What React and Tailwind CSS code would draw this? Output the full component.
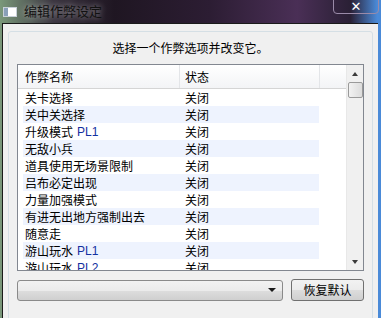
import React from "react";

const rows = [
  { name: "关卡选择" },
  { name: "关中关选择" },
  { name: "升级模式", tag: "PL1" },
  { name: "无敌小兵" },
  { name: "道具使用无场景限制" },
  { name: "吕布必定出现" },
  { name: "力量加强模式" },
  { name: "有进无出地方强制出去" },
  { name: "随意走" },
  { name: "游山玩水", tag: "PL1" },
  { name: "游山玩水", tag: "PL2" },
];

function CheatRow({ row, index }) {
  return (
    <div className={`flex h-[17px] items-center w-[296px] ${index % 2 === 1 ? "bg-[#eef3fe]" : "bg-white"}`}>
      <div className="w-[156px] pl-[2px] flex items-center gap-[4px]">
        <span>{row.name}</span>
        {row.tag && <span className="text-[#1230a0] font-['Liberation_Sans'] text-[12px]">{row.tag}</span>}
      </div>
      <div className="pl-[6px]">关闭</div>
    </div>
  );
}

export default function App() {
  return (
    <div className="w-[381px] h-[318px] overflow-hidden flex flex-col bg-[linear-gradient(90deg,#7a987a_0%,#3b3540_14%,#1f1622_30%,#2c1d33_55%,#4a2f56_78%,#2a2035_92%,#4a8ad8_99%)] font-['Noto_Sans_CJK_SC',sans-serif] text-[12px] text-black">
      {/* title bar */}
      <div className="h-[23px] shrink-0 flex items-start">
        <div className="mt-[7px] ml-[3px] w-[14px] h-[10px] border border-[#c8d0d8] bg-white flex">
          <div className="w-[4px] h-full bg-[#8aa0b8]" />
        </div>
        <div className="ml-[7px] mt-[3px] text-[13px] leading-[16px] text-[#111] [text-shadow:0_0_6px_rgba(255,255,255,0.6)]">
          编辑作弊设定
        </div>
        <div className="ml-auto mr-[2px] -mt-[2px] w-[46px] h-[16px] border border-[#9a8aa8] rounded-b-[4px] flex items-center justify-center text-white text-[13px] font-bold leading-none font-['DejaVu_Sans']">
          ✕
        </div>
      </div>

      {/* client */}
      <div className="flex-1 ml-[2px] mr-[3px] border-l border-t border-[#1a1a1a] bg-[#f0f0f0] pt-[7px] px-[5px]">
        <div className="h-[290px] border border-[#d5dfe5] rounded-[3px] bg-[#f0f0f0] flex flex-col px-[8px]">
          <div className="h-[32px] flex items-center justify-center text-[12px]">选择一个作弊选项并改变它。</div>

          {/* list box */}
          <div className="h-[207px] border border-[#828790] bg-white flex">
            <div className="flex-1 flex flex-col overflow-hidden">
              <div className="h-[24px] shrink-0 flex items-center border-b border-[#d5d5d5] bg-[linear-gradient(#ffffff,#f3f4f6)]">
                <div className="w-[162px] pl-[7px] h-full flex items-center border-r border-[#e3e5e8]">作弊名称</div>
                <div className="w-[140px] pl-[5px] h-full flex items-center border-r border-[#e3e5e8]">状态</div>
              </div>
              <div className="pl-[5px] flex flex-col">
                {rows.map((row, i) => (
                  <CheatRow key={i} row={row} index={i} />
                ))}
              </div>
            </div>
            {/* scrollbar */}
            <div className="w-[17px] shrink-0 bg-[#f0f0f0] border-l border-[#e8e8e8] flex flex-col items-center">
              <div className="h-[17px] flex items-center justify-center">
                <div className="w-0 h-0 border-l-[3px] border-r-[3px] border-b-[4px] border-l-transparent border-r-transparent border-b-[#3a3a3a]" />
              </div>
              <div className="w-[15px] h-[16px] border border-[#9a9a9a] rounded-[2px] bg-[linear-gradient(90deg,#f2f2f2,#dcdcdc)]" />
              <div className="flex-1" />
              <div className="h-[17px] flex items-center justify-center">
                <div className="w-0 h-0 border-l-[3px] border-r-[3px] border-t-[4px] border-l-transparent border-r-transparent border-t-[#3a3a3a]" />
              </div>
            </div>
          </div>

          {/* bottom controls */}
          <div className="mt-[8px] flex items-center gap-[8px]">
            <div className="w-[266px] h-[21px] border border-[#8a8a8a] rounded-[3px] bg-[linear-gradient(#f2f2f2_0%,#ebebeb_50%,#dddddd_51%,#cfcfcf_100%)] flex items-center justify-end pr-[6px]">
              <div className="w-0 h-0 border-l-[4px] border-r-[4px] border-t-[4px] border-l-transparent border-r-transparent border-t-[#1a1a1a]" />
            </div>
            <div className="w-[73px] h-[22px] border border-[#707070] rounded-[3px] bg-[linear-gradient(#f2f2f2_0%,#ebebeb_50%,#dddddd_51%,#cfcfcf_100%)] flex items-center justify-center text-[12px]">
              恢复默认
            </div>
          </div>
        </div>
      </div>
    </div>
  );
}
